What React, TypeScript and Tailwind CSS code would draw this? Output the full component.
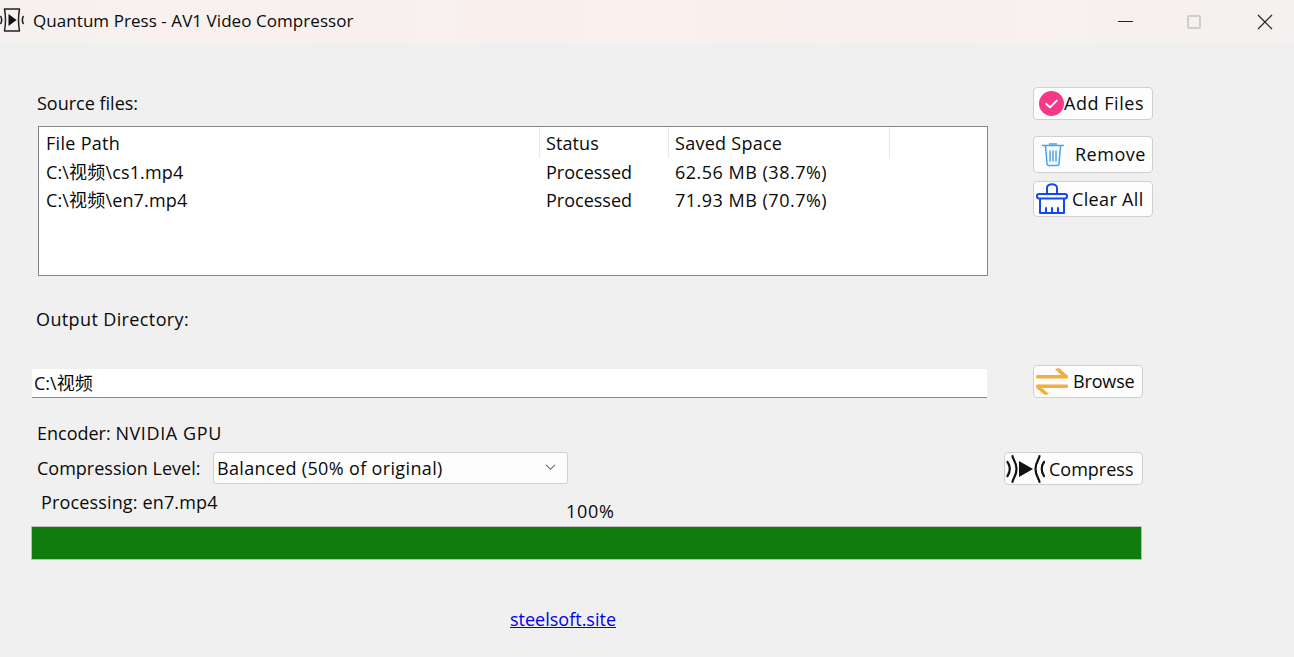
const CompressIcon = () => (
  <svg viewBox="0 0 40 30" className="w-[40px] h-[30px] shrink-0" fill="none" stroke="#111" strokeWidth="2.200" strokeLinecap="round">
    <path d="M1.500 8c3 4 3 10 0 14" />
    <path d="M6.500 2c0 3 4 6 4 13s-4 10-4 13" />
    <path d="M13 7l14 8-14 8z" fill="#111" stroke="none" />
    <path d="M33.500 2c0 3-4 6-4 13s4 10 4 13" />
    <path d="M38 8c-3 4-3 10 0 14" />
  </svg>
);

const TitleLogo = () => (
  <svg viewBox="0 0 24 24" className="w-6 h-6 shrink-0 mb-[3px]" fill="none" stroke="#222" strokeLinecap="round">
    <path d="M4.500 1h15q-2 11 0 22h-15q2-11 0-22z" strokeWidth="1.500" strokeLinejoin="round" />
    <path d="M8.500 6l8 6-8 6z" fill="#111" stroke="none" />
    <path d="M.8 8.500c1 2 1 5 0 7" strokeWidth="1.600" />
    <path d="M23.200 8.500c-1 2-1 5 0 7" strokeWidth="1.600" />
  </svg>
);

const TrashIcon = () => (
  <svg viewBox="0 0 24 24" className="w-[24px] h-[24px] shrink-0" fill="none" stroke="#4aa3ea" strokeWidth="1.500" strokeLinecap="round">
    <path d="M1.500 2.500h21" />
    <path d="M8.500 1h7" />
    <path d="M4.500 3l1.500 17.500c.1 1.200 1 2 2 2h8c1 0 1.900-.8 2-2L19.500 3" />
    <path d="M9 8v10M12 8v10M15 8v10" />
  </svg>
);

const BroomIcon = () => (
  <svg viewBox="0 0 32 32" className="w-[32px] h-[32px] shrink-0" fill="none" stroke="#1447f5" strokeWidth="2" strokeLinecap="round" strokeLinejoin="round">
    <path d="M11 11V5c0-5 10-5 10 0v6" />
    <rect x="1" y="11" width="30" height="4.500" rx="2" />
    <path d="M4 16v14h24V16" />
    <path d="M10 30v-5M16 30v-5M22 30v-5" />
  </svg>
);

const SwapIcon = () => (
  <svg viewBox="0 0 32 27" className="w-[32px] h-[27px] shrink-0" fill="#f4ae3d">
    <path d="M1.500 7h29a1.700 1.700 0 0 1 0 3.500h-29a1.700 1.700 0 0 1 0-3.500z" />
    <path d="M19 1l4-1 9 8h-6z" />
    <path d="M1.500 16.500h29a1.700 1.700 0 0 1 0 3.500h-29a1.700 1.700 0 0 1 0-3.500z" />
    <path d="M0 20h6l7 6-4 1z" />
  </svg>
);

const rows = [
  { path: "C:\\视频\\cs1.mp4", status: "Processed", saved: "62.56 MB (38.7%)" },
  { path: "C:\\视频\\en7.mp4", status: "Processed", saved: "71.93 MB (70.7%)" },
];

const btn =
  "flex items-center bg-[#fdfdfd] border border-[#d0d0d0] rounded-[4px] leading-none";

export default function App() {
  return (
    <div className="w-[1294px] h-[657px] overflow-hidden bg-[#f0f0f0] text-[#0a0a0a] text-[18px] font-['Open_Sans','Noto_Sans_CJK_SC',sans-serif]">
      {/* title bar */}
      <div className="h-[43px] flex items-center bg-gradient-to-r from-[#f6f1f0] via-[#faf0ee] to-[#f5f1f0]">
        <TitleLogo />
        <span className="ml-[9px] mb-[2px] text-[17px] tracking-[0.06px]">Quantum Press - AV1 Video Compressor</span>
        <div className="ml-auto flex items-center">
          <div className="w-[15px] h-[1px] bg-[#222] mr-[54px]" />
          <div className="w-[14px] h-[14px] border-2 border-[#cfcfcf] rounded-[2px] mr-[56px]" />
          <svg viewBox="0 0 16 16" className="w-4 h-4 mr-[21px]" fill="none" stroke="#222" strokeWidth="1.200">
            <path d="M1 1l14 14M15 1L1 15" />
          </svg>
        </div>
      </div>

      {/* source files */}
      <div className="flex pt-[44px]">
        <div className="ml-[37px] w-[951px]">
          <div className="h-[39px] pt-[4px] leading-[24px]">Source files:</div>
          <div className="ml-[1px] h-[150px] bg-white border border-[#85858d]">
            <div className="flex h-[31px] leading-[33px]">
              <div className="w-[501px] pl-[7px] border-r border-[#e8e8e8] tracking-[0.3px]">File Path</div>
              <div className="w-[129px] pl-[6px] border-r border-[#e8e8e8] tracking-[0.1px]">Status</div>
              <div className="w-[221px] pl-[6px] border-r border-[#e8e8e8] tracking-[0.27px]">Saved Space</div>
            </div>
            {rows.map((row) => (
              <div key={row.path} className="flex h-[28px] leading-[28px]">
                <div className="w-[501px] pl-[7px] tracking-[0.15px]">{row.path}</div>
                <div className="w-[129px] pl-[6px]">{row.status}</div>
                <div className="pl-[6px] tracking-[0.5px]">{row.saved}</div>
              </div>
            ))}
          </div>
        </div>
        <div className="ml-[45px] w-[120px] flex flex-col">
          <button className={`${btn} h-[33px] pl-[5px]`}>
            <svg viewBox="0 0 26 26" className="w-[25px] h-[25px] shrink-0" fill="none">
              <circle cx="13" cy="13" r="13" fill="#f5388a" />
              <path d="M7.500 13.500l4 3.500 7-7" stroke="#fff" strokeWidth="2" strokeLinecap="round" strokeLinejoin="round" />
            </svg>
            <span className="mb-[2px] tracking-[0.55px]">Add Files</span>
          </button>
          <button className={`${btn} h-[37px] mt-[16px] pl-[7px]`}>
            <TrashIcon />
            <span className="ml-[10px] mb-[2px] tracking-[0.5px]">Remove</span>
          </button>
          <button className={`${btn} h-[36px] mt-[8px] pl-[2px]`}>
            <BroomIcon />
            <span className="ml-[4px] tracking-[0.35px]">Clear All</span>
          </button>
        </div>
      </div>

      {/* output directory */}
      <div className="ml-[36px] mt-[31px] h-[24px] leading-[24px] tracking-[0.38px]">Output Directory:</div>
      <div className="flex items-start mt-[34px]">
        <div className="ml-[32px] mt-[4px] w-[955px] h-[29px] bg-white border-b border-[#868686] pl-[2px] leading-[29px]">C:\视频</div>
        <button className={`${btn} ml-[46px] w-[110px] h-[33px] pl-[2px]`}>
          <SwapIcon />
          <span className="ml-[5px] mb-[2px] tracking-[-0.15px]">Browse</span>
        </button>
      </div>

      {/* encoder */}
      <div className="ml-[37px] mt-[23px] h-[24px] leading-[24px]">
        Encoder: <span className="tracking-[0.6px]">NVIDIA GPU</span>
      </div>
      <div className="flex items-center mt-[5px]">
        <span className="ml-[37px] mt-[2px] w-[176px]">Compression Level:</span>
        <div className="w-[355px] h-[32px] bg-[#fdfdfd] border border-[#d0d0d0] rounded-[3px] pl-[3px] pr-[11px] flex items-center justify-between">
          <span className="mt-[2px] tracking-[0.35px]">Balanced (50% of original)</span>
          <svg viewBox="0 0 12 8" className="w-[11px] h-[7px]" fill="none" stroke="#666" strokeWidth="1.200">
            <path d="M1 1l5 5 5-5" />
          </svg>
        </div>
        <button className={`${btn} ml-[436px] w-[139px] h-[33px] mt-[2px] pl-[1px]`}>
          <CompressIcon />
          <span className="ml-[3px]">Compress</span>
        </button>
      </div>

      {/* progress */}
      <div className="flex items-start h-[41px]">
        <span className="ml-[41px] w-[525px] h-[24px] leading-[24px] mt-[5px] tracking-[0.15px]">Processing: en7.mp4</span>
        <span className="mt-[14px] leading-[24px] tracking-[0.7px]">100%</span>
      </div>
      <div className="ml-[31px] w-[1111px] h-[34px] bg-[#107c10] border border-[#bcbcbc]" />

      <div className="mt-[47px] ml-[510px] leading-[24px]">
        <a href="#" className="text-[#0000ee] underline">steelsoft.site</a>
      </div>
    </div>
  );
}
